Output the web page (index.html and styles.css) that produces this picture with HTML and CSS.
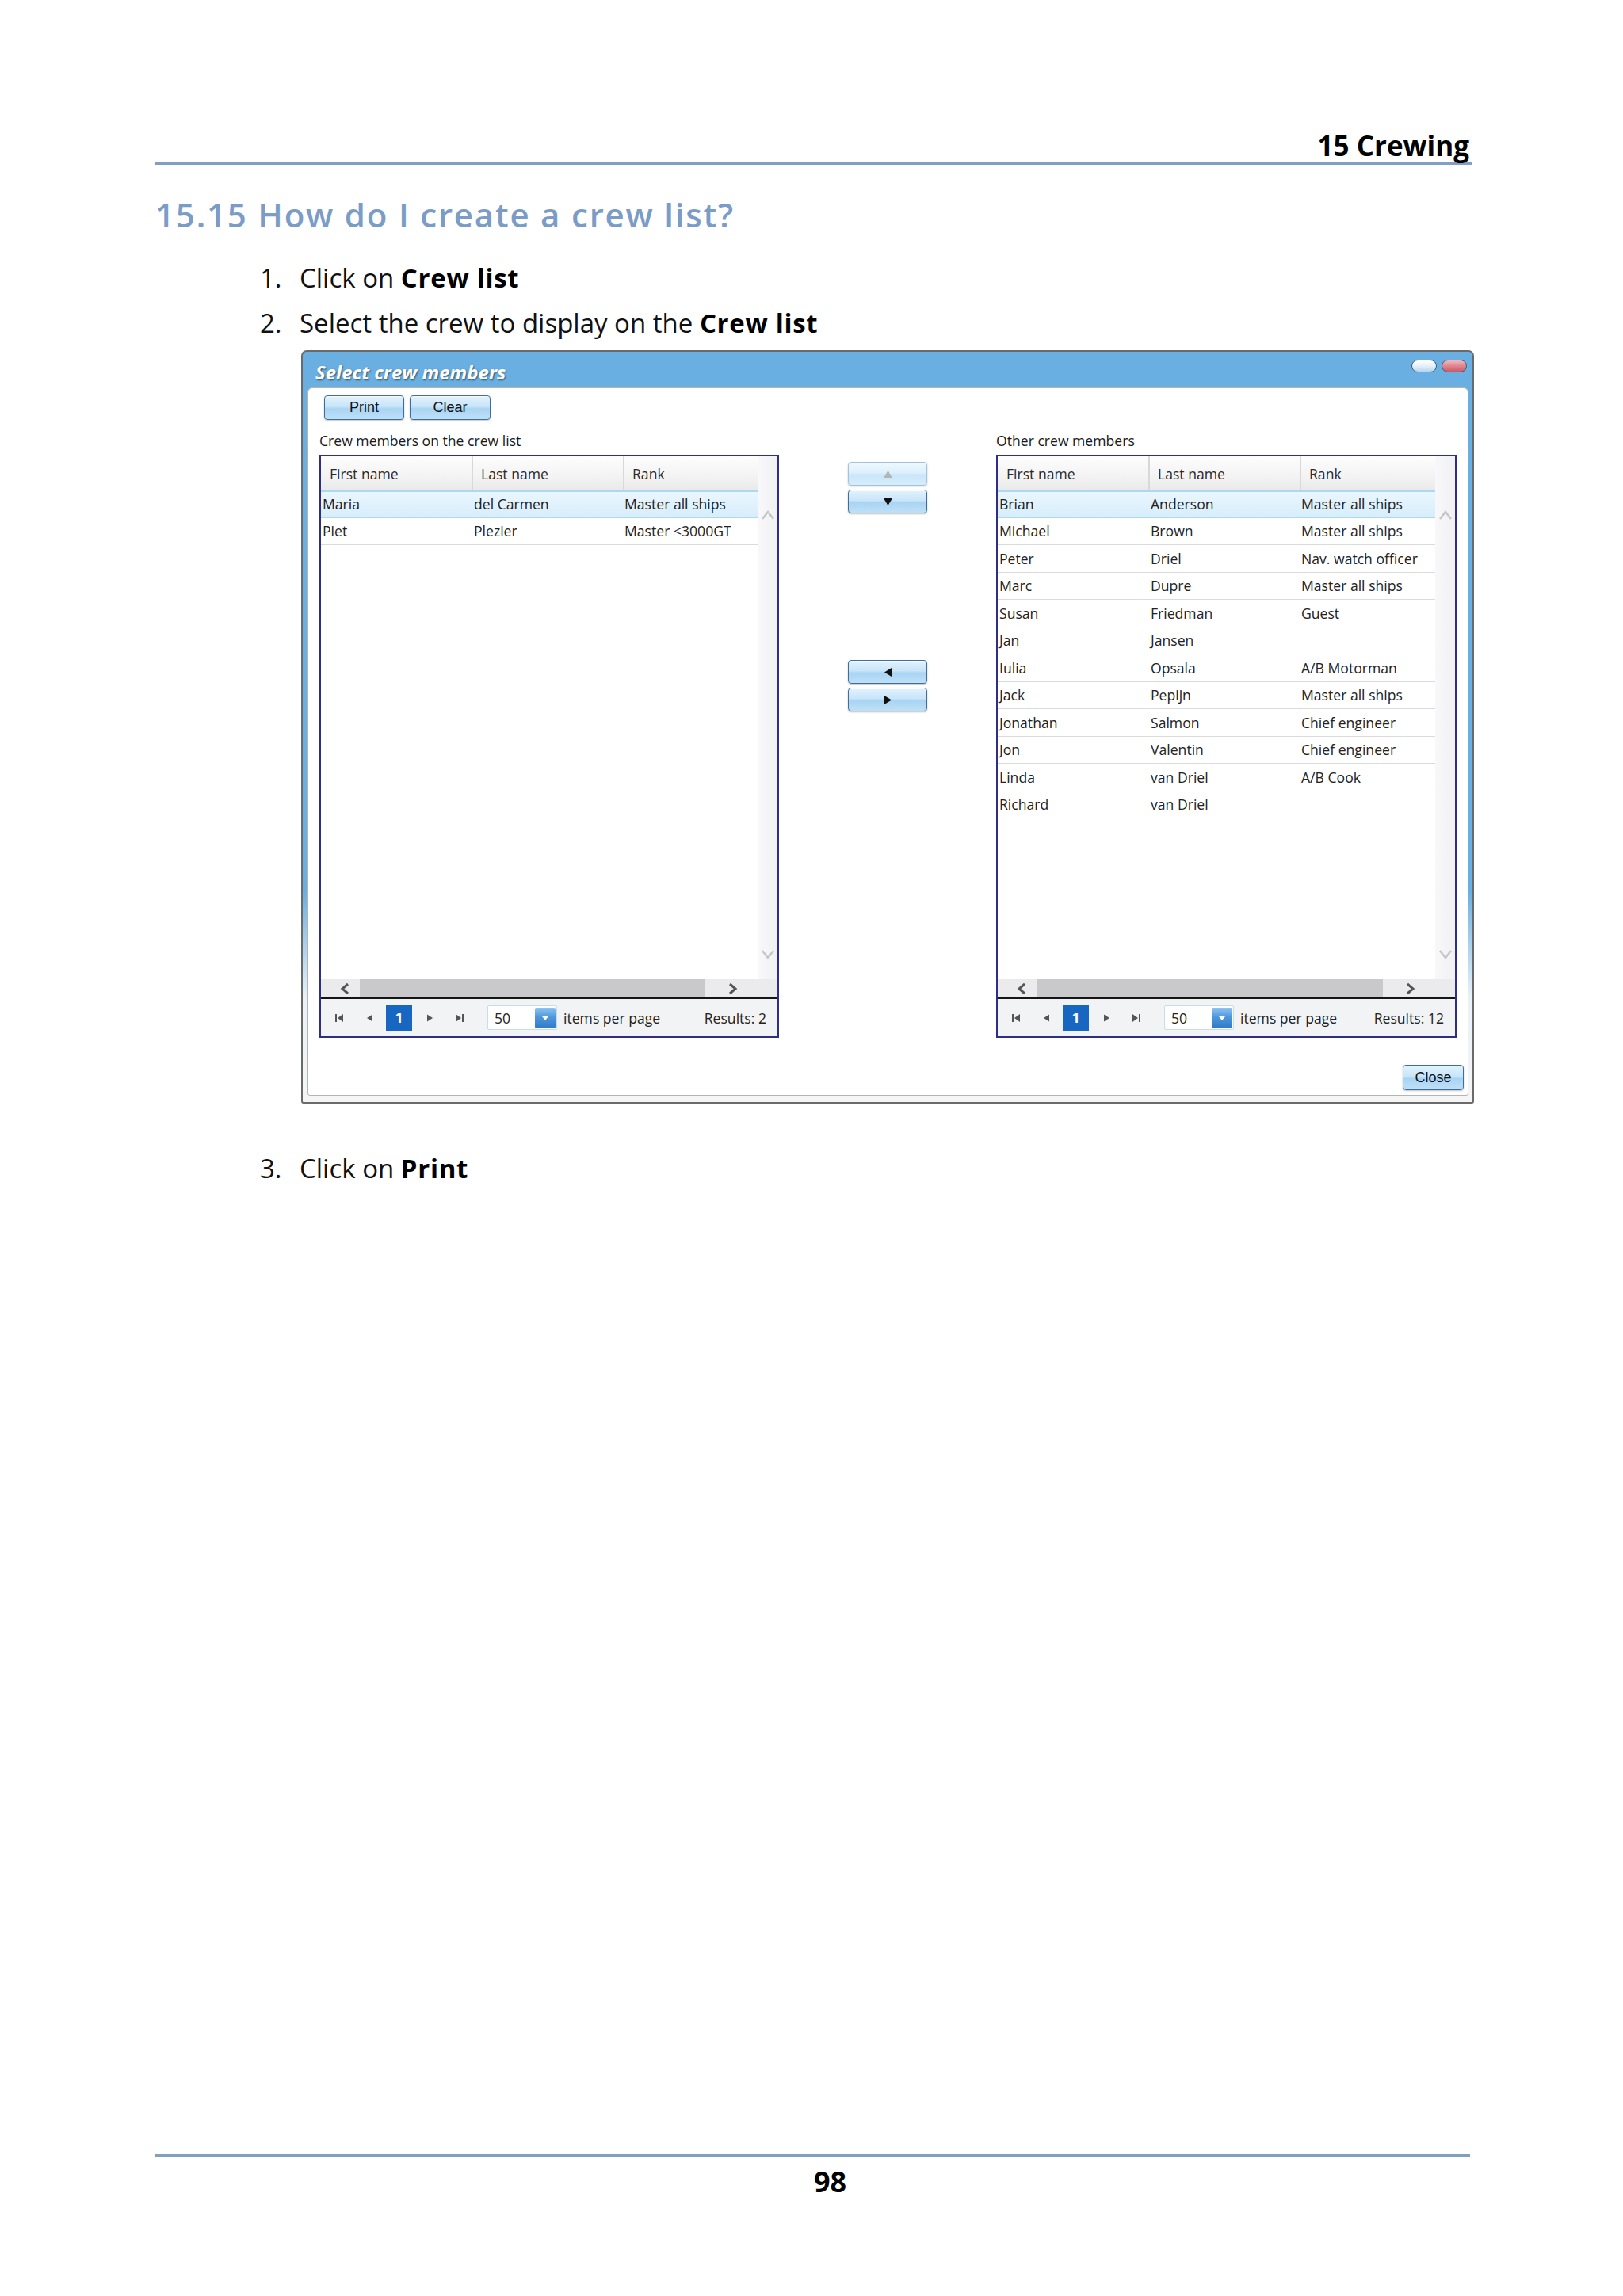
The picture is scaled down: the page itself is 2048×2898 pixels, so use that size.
FILE: index.html
```html
<!DOCTYPE html>
<html lang="en">
<head>
<meta charset="utf-8">
<title>15.15 How do I create a crew list?</title>
<link rel="stylesheet" href="styles.css">
</head>
<body>
<div class="page">
  <header class="running-head"><span>15 Crewing</span></header>
  <h1 class="section-title">15.15 How do I create a crew list?</h1>
  <ol class="steps">
    <li><span class="num">1.</span><span>Click on <b>Crew list</b></span></li>
    <li><span class="num">2.</span><span>Select the crew to display on the <b>Crew list</b></span></li>
  </ol>

  <div class="dialog">
    <div class="titlebar">
      <div class="title">Select crew members</div>
      <div class="pills"><span class="pill pill-min"></span><span class="pill pill-close"></span></div>
    </div>
    <div class="panel">
      <div class="toolbar">
        <button class="btn tb-print">Print</button>
        <button class="btn tb-clear">Clear</button>
      </div>
      <div class="lists">
        <div class="list-block">
          <div class="list-label">Crew members on the crew list</div>
          <div class="grid">
            <div class="grid-area">
              <div class="cols">
                <div class="head"><div>First name</div><div>Last name</div><div>Rank</div></div>
                <div class="row sel"><div>Maria</div><div>del Carmen</div><div>Master all ships</div></div>
                <div class="row"><div>Piet</div><div>Plezier</div><div>Master &lt;3000GT</div></div>
              </div>
              <div class="vscroll">
                <svg width="18" height="14" viewBox="0 0 18 14"><polyline points="2,12 9,3 16,12" fill="none" stroke="#c6c6c6" stroke-width="2.5"/></svg>
                <svg width="18" height="13" viewBox="0 0 18 13"><polyline points="2,2 9,11 16,2" fill="none" stroke="#c6c6c6" stroke-width="2.5"/></svg>
              </div>
            </div>
            <div class="hscroll">
              <div class="hs-left"><svg width="14" height="16" viewBox="0 0 14 16"><polyline points="11,2 4,8 11,14" fill="none" stroke="#555" stroke-width="3"/></svg></div>
              <div class="thumb"></div>
              <div class="hs-right"><svg width="14" height="16" viewBox="0 0 14 16"><polyline points="3,2 10,8 3,14" fill="none" stroke="#555" stroke-width="3"/></svg></div>
            </div>
            <div class="pager">
              <svg class="pg-first" width="10" height="12" viewBox="0 0 10 12"><rect x="0" y="1" width="2" height="10" fill="#555"/><polygon points="10,1 3,6 10,11" fill="#555"/></svg>
              <svg class="pg-prev" width="8" height="12" viewBox="0 0 8 12"><polygon points="8,1.5 1,6 8,10.5" fill="#555"/></svg>
              <span class="pg-num">1</span>
              <svg class="pg-next" width="9" height="12" viewBox="0 0 9 12"><polygon points="1,1.5 8,6 1,10.5" fill="#555"/></svg>
              <svg class="pg-last" width="10" height="12" viewBox="0 0 10 12"><polygon points="0,1 7,6 0,11" fill="#555"/><rect x="8" y="1" width="2" height="10" fill="#555"/></svg>
              <span class="pg-size"><span class="pg-val">50</span><span class="pg-dd"><svg width="10" height="7" viewBox="0 0 10 7"><polygon points="1,1 9,1 5,6" fill="#fff"/></svg></span></span>
              <span class="pg-text">items per page</span>
              <span class="pg-results">Results: 2</span>
            </div>
          </div>
        </div>

        <div class="movers">
          <button class="btn mv mv-off"><svg width="13" height="11" viewBox="0 0 13 11"><polygon points="6.5,1 12,10 1,10" fill="#b4b4b4"/></svg></button>
          <button class="btn mv"><svg width="13" height="11" viewBox="0 0 13 11"><polygon points="1,1 12,1 6.5,10" fill="#111"/></svg></button>
          <button class="btn mv mv-gap"><svg width="11" height="13" viewBox="0 0 11 13"><polygon points="10,1 10,12 1,6.5" fill="#111"/></svg></button>
          <button class="btn mv"><svg width="11" height="13" viewBox="0 0 11 13"><polygon points="1,1 1,12 10,6.5" fill="#111"/></svg></button>
        </div>

        <div class="list-block">
          <div class="list-label">Other crew members</div>
          <div class="grid">
            <div class="grid-area">
              <div class="cols">
                <div class="head"><div>First name</div><div>Last name</div><div>Rank</div></div>
                <div class="row sel"><div>Brian</div><div>Anderson</div><div>Master all ships</div></div>
                <div class="row"><div>Michael</div><div>Brown</div><div>Master all ships</div></div>
                <div class="row"><div>Peter</div><div>Driel</div><div>Nav. watch officer</div></div>
                <div class="row"><div>Marc</div><div>Dupre</div><div>Master all ships</div></div>
                <div class="row"><div>Susan</div><div>Friedman</div><div>Guest</div></div>
                <div class="row"><div>Jan</div><div>Jansen</div><div></div></div>
                <div class="row"><div>Iulia</div><div>Opsala</div><div>A/B Motorman</div></div>
                <div class="row"><div>Jack</div><div>Pepijn</div><div>Master all ships</div></div>
                <div class="row"><div>Jonathan</div><div>Salmon</div><div>Chief engineer</div></div>
                <div class="row"><div>Jon</div><div>Valentin</div><div>Chief engineer</div></div>
                <div class="row"><div>Linda</div><div>van Driel</div><div>A/B Cook</div></div>
                <div class="row"><div>Richard</div><div>van Driel</div><div></div></div>
              </div>
              <div class="vscroll">
                <svg width="18" height="14" viewBox="0 0 18 14"><polyline points="2,12 9,3 16,12" fill="none" stroke="#c6c6c6" stroke-width="2.5"/></svg>
                <svg width="18" height="13" viewBox="0 0 18 13"><polyline points="2,2 9,11 16,2" fill="none" stroke="#c6c6c6" stroke-width="2.5"/></svg>
              </div>
            </div>
            <div class="hscroll">
              <div class="hs-left"><svg width="14" height="16" viewBox="0 0 14 16"><polyline points="11,2 4,8 11,14" fill="none" stroke="#555" stroke-width="3"/></svg></div>
              <div class="thumb"></div>
              <div class="hs-right"><svg width="14" height="16" viewBox="0 0 14 16"><polyline points="3,2 10,8 3,14" fill="none" stroke="#555" stroke-width="3"/></svg></div>
            </div>
            <div class="pager">
              <svg class="pg-first" width="10" height="12" viewBox="0 0 10 12"><rect x="0" y="1" width="2" height="10" fill="#555"/><polygon points="10,1 3,6 10,11" fill="#555"/></svg>
              <svg class="pg-prev" width="8" height="12" viewBox="0 0 8 12"><polygon points="8,1.5 1,6 8,10.5" fill="#555"/></svg>
              <span class="pg-num">1</span>
              <svg class="pg-next" width="9" height="12" viewBox="0 0 9 12"><polygon points="1,1.5 8,6 1,10.5" fill="#555"/></svg>
              <svg class="pg-last" width="10" height="12" viewBox="0 0 10 12"><polygon points="0,1 7,6 0,11" fill="#555"/><rect x="8" y="1" width="2" height="10" fill="#555"/></svg>
              <span class="pg-size"><span class="pg-val">50</span><span class="pg-dd"><svg width="10" height="7" viewBox="0 0 10 7"><polygon points="1,1 9,1 5,6" fill="#fff"/></svg></span></span>
              <span class="pg-text">items per page</span>
              <span class="pg-results">Results: 12</span>
            </div>
          </div>
        </div>
      </div>
      <div class="panel-foot">
        <button class="btn close-btn">Close</button>
      </div>
    </div>
  </div>

  <ol class="steps steps-last">
    <li><span class="num">3.</span><span>Click on <b>Print</b></span></li>
  </ol>

  <footer class="running-foot"><span>98</span></footer>
</div>
</body>
</html>
```

FILE: styles.css
```css
html, body {
  margin: 0;
  padding: 0;
  background: #ffffff;
}

body {
  font-family: "Open Sans", "Noto Sans", sans-serif;
  color: #111;
}

.page {
  box-sizing: border-box;
  height: 2898px;
  width: 2048px;
  padding: 166px 0 126px 196px;
  display: flex;
  flex-direction: column;
}

/* running head */
.running-head {
  width: 1662px;
  display: flex;
  justify-content: flex-end;
  font-weight: 700;
  font-size: 35px;
  line-height: 35px;
  padding-bottom: 4px;
  border-bottom: 3px solid #819fc3;
  color: #000;
}
.running-head span {
  margin-right: 4px;
}

.section-title {
  margin: 42px 0 0 0;
  font-size: 42px;
  line-height: 42px;
  font-weight: 600;
  letter-spacing: 1.8px;
  color: #7b9cc6;
}

/* numbered steps */
.steps {
  list-style: none;
  margin: 30px 0 0 132px;
  padding: 0;
  font-size: 33px;
  line-height: 57px;
  color: #111;
}
.steps li {
  display: flex;
}
.steps .num {
  width: 50px;
  flex: none;
}
.steps b {
  font-weight: 700;
  letter-spacing: 0.7px;
  color: #000;
}
.steps-last {
  margin-top: 53px;
}

/* dialog */
.dialog {
  margin: 6px 0 0 184px;
  width: 1480px;
  height: 951px;
  box-sizing: border-box;
  border: 2px solid #6a6a6a;
  border-radius: 7px 7px 3px 3px;
  background: linear-gradient(to bottom, #6aafe2 0%, #6aafe2 72%, #e9f1f8 86%, #f5f5f5 100%);
  padding: 0 5px 8px 6px;
  display: flex;
  flex-direction: column;
}
.titlebar {
  height: 45px;
  flex: none;
  display: flex;
  justify-content: space-between;
  align-items: flex-start;
  padding: 0 2px 0 10px;
}
.title {
  margin-top: 11px;
  font-size: 24px;
  line-height: 30px;
  font-weight: 700;
  font-style: italic;
  color: #ffffff;
  text-shadow: 1px 1px 2px rgba(0, 0, 0, 0.55);
}
.pills {
  display: flex;
  gap: 6px;
  margin-top: 10px;
}
.pill {
  display: block;
  width: 32px;
  height: 16px;
  box-sizing: border-box;
  border-radius: 8px;
  border: 1px solid #4d5a6c;
}
.pill-min {
  background: linear-gradient(to bottom, #ffffff 0%, #e6f2fb 45%, #b5d6ee 100%);
}
.pill-close {
  background: linear-gradient(to bottom, #f2b8c0 0%, #de8690 50%, #c95a68 100%);
}

.panel {
  flex: 1;
  background: #ffffff;
  border: 1px solid #b4b4b4;
  border-radius: 6px 6px 3px 3px;
  padding: 9px 14px 0 14px;
  display: flex;
  flex-direction: column;
}

.btn {
  font-family: "Liberation Sans", Arial, sans-serif;
  font-size: 18px;
  color: #111;
  box-sizing: border-box;
  border: 1px solid #3f6d9c;
  border-radius: 4px;
  background: linear-gradient(to bottom, #e2f2fd 0%, #c8e5f9 45%, #a8d4f4 55%, #bfe0f7 100%);
  box-shadow: 0 1px 2px rgba(0, 0, 0, 0.25), inset 0 1px 0 rgba(255, 255, 255, 0.75);
  padding: 0;
  margin: 0;
  display: flex;
  align-items: center;
  justify-content: center;
}

.toolbar {
  display: flex;
  gap: 7px;
  padding-left: 6px;
}
.tb-print {
  width: 101px;
  height: 31px;
}
.tb-clear {
  width: 102px;
  height: 31px;
}

.lists {
  display: flex;
  gap: 87px;
  margin-top: 15px;
}
.list-block {
  width: 580px;
  flex: none;
}
.list-block + .movers + .list-block {
  width: 581px;
}
.list-label {
  font-size: 17.6px;
  line-height: 22px;
  margin-bottom: 7px;
  color: #1a1a1a;
}

.grid {
  box-sizing: border-box;
  height: 736px;
  border: 2px solid #2e2e86;
  display: flex;
  flex-direction: column;
  font-size: 17.6px;
  color: #222;
}
.grid-area {
  height: 660px;
  flex: none;
  display: flex;
}
.cols {
  width: 552px;
  flex: none;
  background: #ffffff;
}
.head,
.row {
  display: grid;
  grid-template-columns: 190px 191px 171px;
  align-items: center;
}
.head {
  height: 43px;
  background: linear-gradient(to bottom, #fdfdfd 0%, #f3f3f3 60%, #e9e9e9 100%);
}
.head > div {
  height: 100%;
  display: flex;
  align-items: center;
  padding-left: 11px;
  color: #2a2a2a;
}
.head > div + div {
  box-sizing: border-box;
  border-left: 2px solid #d8d8d8;
  padding-left: 10px;
}
.row {
  box-sizing: border-box;
  height: 34.5px;
  border-bottom: 1px solid #dbdbdb;
}
.row > div {
  padding-left: 2px;
  white-space: nowrap;
}
.row > div:nth-child(2) {
  padding-left: 3px;
}
.row.sel {
  background: linear-gradient(to bottom, #eaf6fe 0%, #d7eefb 100%);
  border-top: 2px solid #acd9f2;
  border-bottom: 2px solid #acd9f2;
}

.vscroll {
  flex: 1;
  background: linear-gradient(to right, #f8f8fa, #f1f1f4);
  display: flex;
  flex-direction: column;
  justify-content: space-between;
  align-items: center;
  padding: 67px 0 25px 0;
}

.hscroll {
  height: 23px;
  flex: none;
  display: flex;
  background: #ebebed;
  border-bottom: 2px solid #151515;
}
.hs-left {
  width: 49px;
  box-sizing: border-box;
  padding-left: 23px;
  display: flex;
  align-items: center;
  flex: none;
}
.thumb {
  flex: 1;
  background: #c9c9cc;
}
.hs-right {
  width: 91px;
  box-sizing: border-box;
  padding-left: 28px;
  display: flex;
  align-items: center;
  flex: none;
}

.pager {
  flex: 1;
  display: flex;
  align-items: center;
  background: #f1f3f5;
  padding: 0 14px 0 18px;
  color: #222;
}
.pg-prev { margin-left: 29px; }
.pg-num {
  margin-left: 17px;
  width: 33px;
  height: 33px;
  background: #1766c2;
  color: #ffffff;
  font-weight: 700;
  font-size: 17px;
  display: flex;
  align-items: center;
  justify-content: center;
}
.pg-next { margin-left: 18px; }
.pg-last { margin-left: 28px; }
.pg-size {
  margin-left: 30px;
  width: 88px;
  height: 31px;
  box-sizing: border-box;
  border: 1px solid #c7dcef;
  border-radius: 2px;
  background: #ffffff;
  display: flex;
  align-items: stretch;
}
.pg-val {
  flex: 1;
  padding-left: 8px;
  display: flex;
  align-items: center;
}
.pg-dd {
  width: 26px;
  margin: 2px 1px 1px 0;
  border-radius: 2px;
  background: linear-gradient(to bottom, #8cc4f2 0%, #4f97dc 45%, #2f79c8 100%);
  display: flex;
  align-items: center;
  justify-content: center;
}
.pg-text { margin-left: 8px; }
.pg-results { margin-left: auto; }

.movers {
  width: 100px;
  flex: none;
  display: flex;
  flex-direction: column;
  padding-top: 38px;
}
.mv {
  width: 100px;
  height: 30px;
}
.mv + .mv {
  margin-top: 5px;
}
.mv.mv-gap {
  margin-top: 185px;
}
.mv-off {
  border-color: #a4c2dc;
  background: linear-gradient(to bottom, #f0f9fe 0%, #dcf0fc 45%, #c9e6f9 55%, #d6edfb 100%);
}

.panel-foot {
  display: flex;
  justify-content: flex-end;
  margin: 34px -9px 0 0;
}
.close-btn {
  width: 77px;
  height: 32px;
}

/* running foot */
.running-foot {
  margin-top: auto;
  width: 1659px;
  border-top: 3px solid #819fc3;
  padding: 14px 0 0 44px;
  box-sizing: border-box;
  text-align: center;
  font-weight: 700;
  font-size: 36px;
  line-height: 36px;
  color: #000;
}
```
